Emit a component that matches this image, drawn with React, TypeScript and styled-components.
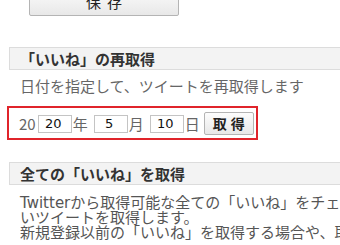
import React from "react";
import styled, { createGlobalStyle } from "styled-components";

const GlobalStyle = createGlobalStyle`
  html, body {
    margin: 0;
    padding: 0;
    background: #fff;
    overflow: hidden;
  }
  body {
    font-family: "DejaVu Sans", "Noto Sans CJK JP", sans-serif;
    font-size: 15px;
    color: #555;
  }
`;

const Page = styled.div`
  width: 420px;
  padding-left: 9px;
`;

const SaveRow = styled.div`
  padding-left: 20px;
  margin-top: -14px;
`;

const Button = styled.button<{ $wide?: boolean }>`
  font-family: "Noto Sans CJK JP", sans-serif;
  font-size: ${p => (p.$wide ? "15px" : "14px")};
  font-weight: ${p => (p.$wide ? 400 : 700)};
  color: #222;
  letter-spacing: ${p => (p.$wide ? "6px" : "4px")};
  width: ${p => (p.$wide ? "150px" : "50px")};
  height: ${p => (p.$wide ? "30px" : "23px")};
  padding: 0 0 0 ${p => (p.$wide ? "6px" : "4px")};
  border: 1px solid #b4b4b4;
  border-radius: 2px;
  background: linear-gradient(#fdfdfd, #e8e8e8);
  line-height: 1;
`;

const Heading = styled.h2<{ $top: number }>`
  margin: ${p => p.$top}px 0 0;
  height: 21px;
  line-height: 21px;
  padding-left: 10px;
  border: 1px solid #dcdcdc;
  background: #f3f3f3;
  font-family: "Noto Sans CJK JP", sans-serif;
  font-size: 15px;
  font-weight: 700;
  color: #333;
`;

const Lead = styled.p`
  margin: 9px 0 0 11px;
  line-height: 17px;
  color: #666;
`;

const Picker = styled.div`
  display: flex;
  align-items: center;
  width: 237px;
  height: 30px;
  margin: 10px 0 0 -2px;
  padding-left: 10px;
  border: 2px solid #e0242b;
  font-family: "Noto Sans CJK JP", sans-serif;
  color: #666;
`;

const Unit = styled.span`
  margin-right: 4px;
`;

const NumInput = styled.input`
  box-sizing: border-box;
  width: 34px;
  height: 18px;
  margin: 1px 1px 0 2px;
  padding: 0 3px 0 0;
  border: 1px solid #c4c4c4;
  font-family: "DejaVu Sans", sans-serif;
  font-size: 13px;
  color: #111;
  text-align: center;
`;

const Body = styled.div`
  margin: 11px 0 0 11px;
  white-space: nowrap;
`;

const Line = styled.div`
  height: 15px;
  line-height: 15px;
`;

export default function App() {
  return (
    <>
      <GlobalStyle />
      <Page>
        <SaveRow>
          <Button $wide>保存</Button>
        </SaveRow>

        <Heading $top={31}>「いいね」の再取得</Heading>
        <Lead>日付を指定して、ツイートを再取得します</Lead>
        <Picker>
          <span>20</span>
          <NumInput defaultValue="20" />
          <Unit>年</Unit>
          <NumInput defaultValue="5" />
          <Unit>月</Unit>
          <NumInput defaultValue="10" />
          <Unit>日</Unit>
          <Button>取得</Button>
        </Picker>

        <Heading $top={22}>全ての「いいね」を取得</Heading>
        <Body>
          <Line>Twitterから取得可能な全ての「いいね」をチェックし、新し</Line>
          <Line>いツイートを取得します。</Line>
          <Line>新規登録以前の「いいね」を取得する場合や、取得漏れが</Line>
        </Body>
      </Page>
    </>
  );
}
